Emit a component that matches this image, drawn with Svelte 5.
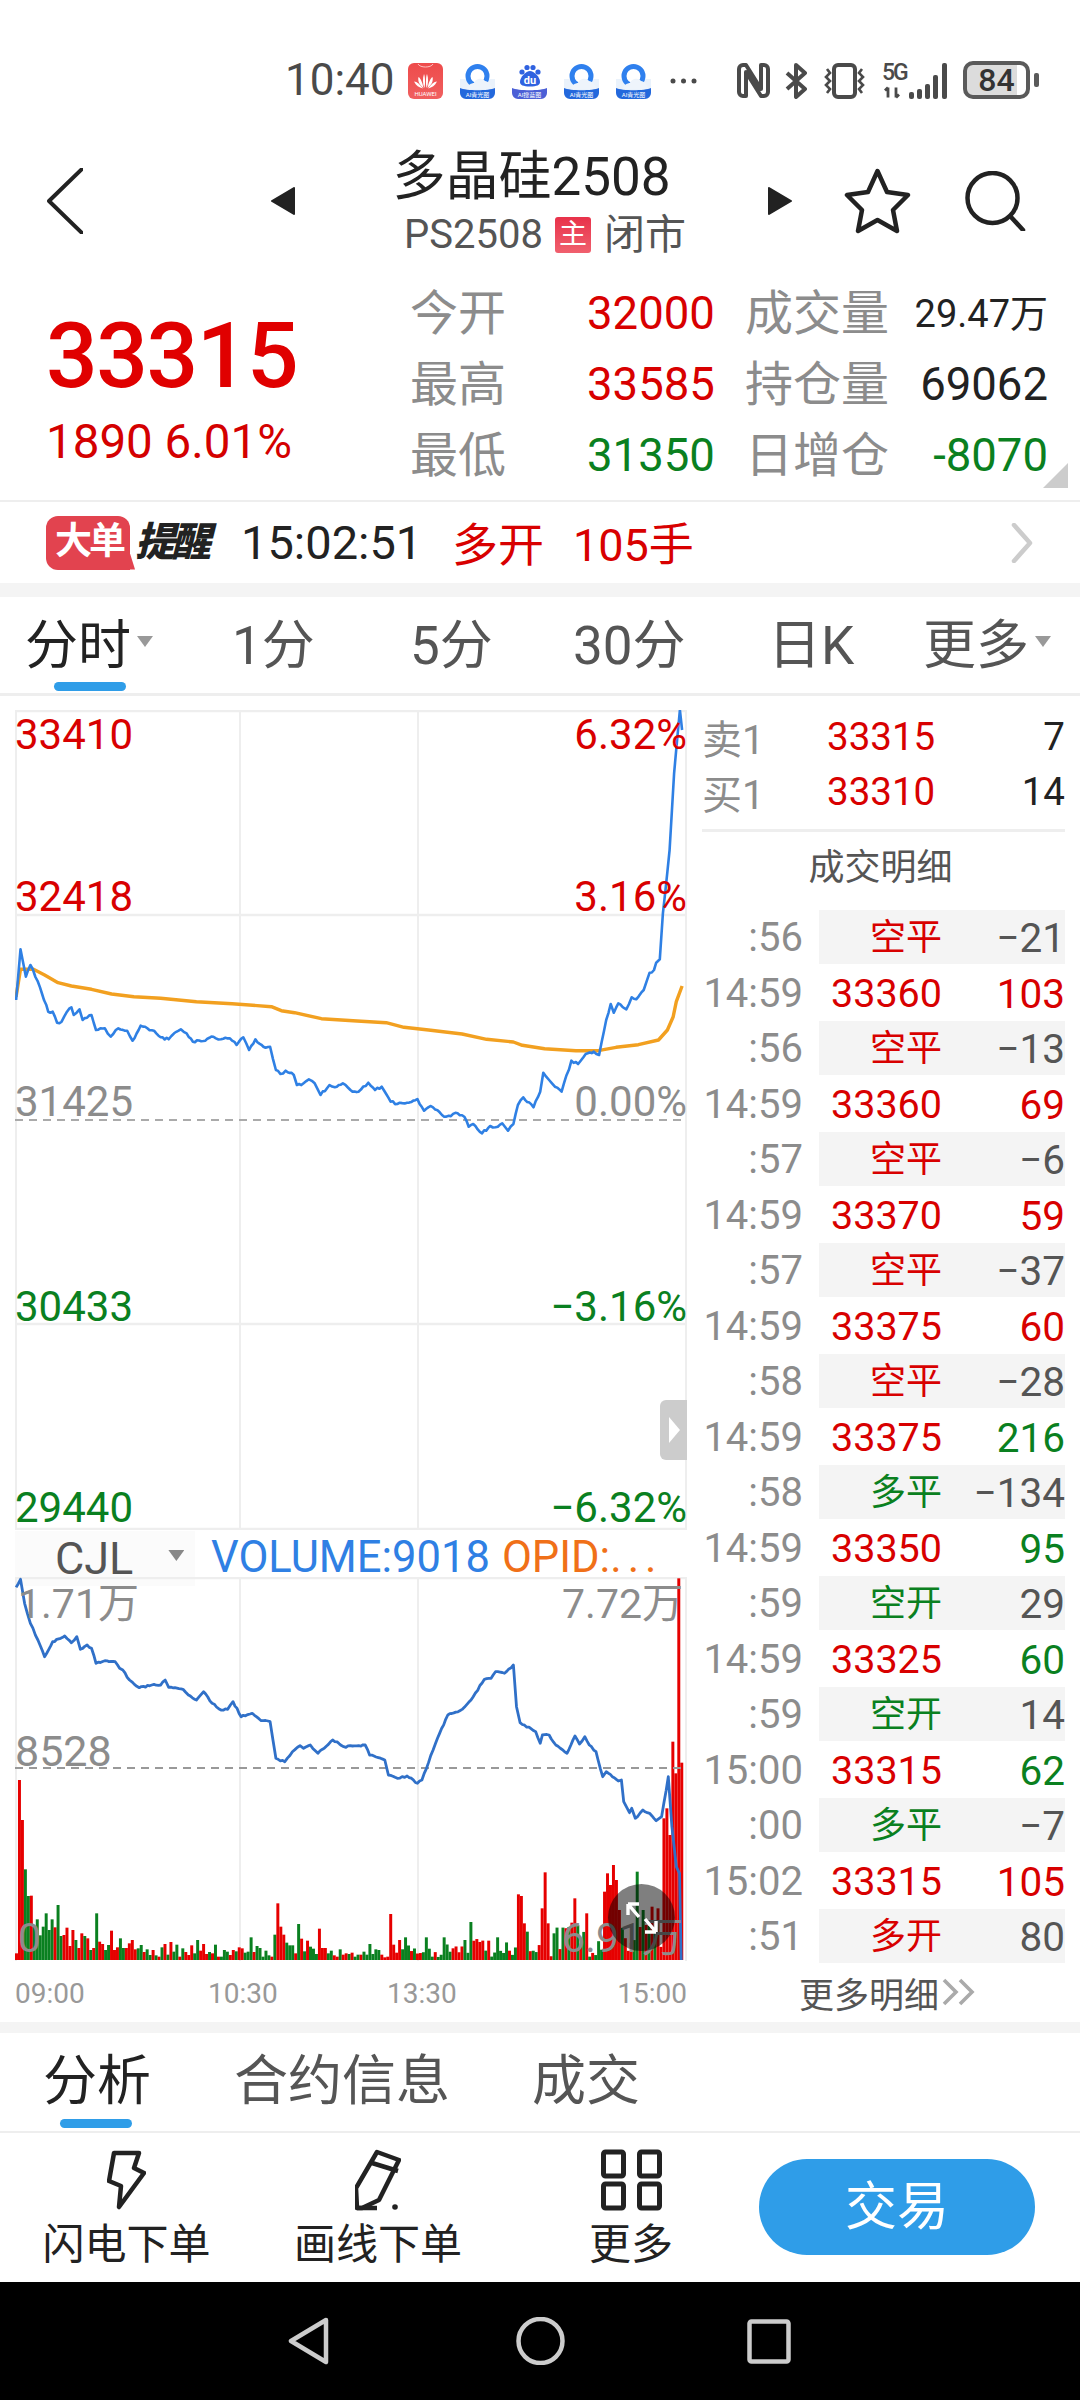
<script>
  const quoteRows = [
    { label: '今开', value: '32000', tone: 'up', label2: '成交量', value2: '29.47万', tone2: 'dark small' },
    { label: '最高', value: '33585', tone: 'up', label2: '持仓量', value2: '69062', tone2: 'dark' },
    { label: '最低', value: '31350', tone: 'down', label2: '日增仓', value2: '-8070', tone2: 'down' }
  ];

  const periods = ['分时', '1分', '5分', '30分', '日K', '更多'];

  const trades = [
    [':56', '空平', '−21', 'up', 'gray'],
    ['14:59', '33360', '103', 'up', 'up'],
    [':56', '空平', '−13', 'up', 'gray'],
    ['14:59', '33360', '69', 'up', 'up'],
    [':57', '空平', '−6', 'up', 'gray'],
    ['14:59', '33370', '59', 'up', 'up'],
    [':57', '空平', '−37', 'up', 'gray'],
    ['14:59', '33375', '60', 'up', 'up'],
    [':58', '空平', '−28', 'up', 'gray'],
    ['14:59', '33375', '216', 'up', 'down'],
    [':58', '多平', '−134', 'down', 'gray'],
    ['14:59', '33350', '95', 'up', 'down'],
    [':59', '空开', '29', 'down', 'gray'],
    ['14:59', '33325', '60', 'up', 'down'],
    [':59', '空开', '14', 'down', 'gray'],
    ['15:00', '33315', '62', 'up', 'down'],
    [':00', '多平', '−7', 'down', 'gray'],
    ['15:02', '33315', '105', 'up', 'up'],
    [':51', '多开', '80', 'up', 'gray']
  ];

  // traced from the chart, x is scaled by 2.24 and y by 3
  const priceRaw = [[36,900],[46,748],[58,830],[68,795],[85,845],[108,935],[118,935],[128,968],[138,965],[150,935],[160,922],[165,945],[178,928],[185,960],[205,945],[215,990],[235,985],[248,1010],[265,985],[285,992],[297,1022],[315,977],[330,985],[345,992],[360,1012],[378,1018],[390,1000],[405,988],[418,1000],[432,1025],[460,1022],[478,1010],[495,1018],[515,1015],[530,1035],[545,1012],[558,1050],[572,1018],[590,1040],[605,1040],[618,1110],[628,1122],[640,1112],[658,1125],[665,1155],[680,1150],[692,1138],[705,1150],[718,1185],[738,1155],[750,1162],[768,1150],[785,1170],[803,1175],[825,1148],[840,1170],[855,1160],[875,1205],[890,1212],[912,1208],[935,1197],[950,1232],[965,1218],[995,1250],[1025,1240],[1040,1250],[1050,1280],[1060,1272],[1080,1300],[1098,1278],[1110,1282],[1125,1270],[1138,1292],[1150,1272],[1160,1215],[1172,1192],[1195,1222],[1210,1175],[1217,1118],[1230,1140],[1243,1160],[1258,1175],[1280,1082],[1295,1092],[1312,1062],[1330,1055],[1342,1065],[1358,960],[1368,912],[1375,938],[1385,910],[1403,928],[1415,892],[1425,898],[1442,870],[1455,818],[1465,810],[1470,788],[1478,778],[1485,640],[1500,450],[1510,220],[1523,30],[1528,90]];

  const avgRaw = [[36,890],[46,808],[75,808],[100,825],[130,848],[160,858],[205,868],[250,882],[300,890],[360,895],[440,905],[520,911],[608,920],[630,932],[660,938],[720,956],[800,963],[865,968],[905,982],[960,990],[1035,1002],[1090,1018],[1150,1026],[1170,1036],[1220,1046],[1290,1052],[1340,1052],[1380,1042],[1430,1034],[1475,1020],[1495,990],[1508,950],[1515,905],[1528,858]];

  const openRaw = [[36,262],[46,238],[55,310],[68,370],[85,420],[100,470],[118,425],[145,408],[160,428],[172,410],[180,448],[195,435],[205,445],[215,490],[235,482],[258,485],[268,505],[275,510],[290,540],[312,563],[340,555],[360,555],[370,540],[378,562],[410,568],[422,585],[440,600],[456,575],[475,610],[495,630],[510,628],[522,605],[540,650],[565,640],[585,662],[605,665],[618,775],[638,785],[655,755],[672,737],[680,745],[695,735],[712,760],[745,720],[770,740],[818,735],[828,765],[862,780],[870,825],[890,835],[912,828],[935,850],[945,840],[980,715],[1003,645],[1030,632],[1040,622],[1060,590],[1085,538],[1100,535],[1110,515],[1130,520],[1150,495],[1157,620],[1165,668],[1200,695],[1210,730],[1215,705],[1230,705],[1245,735],[1255,745],[1270,760],[1288,708],[1298,732],[1310,710],[1320,735],[1335,755],[1350,830],[1358,815],[1385,843],[1392,840],[1397,905],[1410,938],[1415,925],[1423,955],[1440,930],[1455,940],[1470,962],[1482,950],[1497,830],[1505,980],[1515,1100],[1522,1120],[1526,1380]];

  // first 130 volume bars, heights in 1/3 px
  const earlyHeights = [20,540,420,272,192,193,100,122,74,100,140,90,122,98,165,72,75,97,42,90,60,36,80,72,65,30,36,140,55,48,30,45,88,30,38,65,36,36,50,60,32,35,45,24,32,15,30,14,10,38,48,16,54,25,46,10,35,24,15,44,20,60,28,48,18,24,20,46,10,10,30,25,15,30,26,38,35,22,25,68,24,42,36,10,28,14,10,76,170,100,76,52,44,44,20,108,64,26,58,40,34,18,94,36,36,20,28,14,10,32,16,20,18,22,10,16,16,25,16,48,18,32,30,16,8,10,138,46,22,60];
  const earlyTones = 'rrrggrggggggg' + 'rgg' + 'rrrrgrrgrgrgrrggrrrggrrrrggrggrgrgrgrggrgrrrggrrr' + 'grgrgggrrgrrgggrgggggrgrrrgggrgrgrgggrrrggrrgrrgrggrgggggg';

  const tallBars = [[903,1312,'g'],[950,1312,'g'],[990,1312,'g'],[1035,1320,'g'],[1050,1266,'g'],[1090,1322,'r'],[1157,1183,'r'],[1164,1188,'r'],[1170,1270,'r'],[1177,1295,'g'],[1210,1225,'r'],[1217,1117,'r'],[1224,1270,'r'],[1237,1300,'g'],[1275,1268,'r'],[1283,1195,'r'],[1310,1240,'r'],[1349,1175,'r'],[1356,1120,'r'],[1363,1155,'r'],[1370,1095,'r'],[1377,1140,'r'],[1385,1230,'r'],[1423,1115,'g'],[1440,1230,'g'],[1460,1220,'r'],[1472,1225,'r'],[1482,955,'r'],[1488,925,'r'],[1495,1005,'r'],[1502,725,'r'],[1508,820,'r'],[1515,235,'r'],[1522,788,'r'],[1529,775,'g']];

  const RED = '#e60000';
  const GREEN = '#0a8020';

  let seed = 17;
  const next = () => {
    seed = (seed * 1103515245 + 12345) % 2147483648;
    return seed / 2147483648;
  };

  const mapX = (x) => x / 2.24;

  // adds small ticks between the traced points so the line looks like raw ticks
  function toPoints(raw, top, jitter) {
    const pts = [];
    raw.forEach(([x, y], i) => {
      const px = mapX(x);
      const py = top + y / 3;
      if (jitter && i > 0) {
        const prevX = mapX(raw[i - 1][0]);
        const prevY = top + raw[i - 1][1] / 3;
        const steps = Math.floor((px - prevX) / 2);
        for (let s = 1; s < steps; s++) {
          const t = s / steps;
          const ny = prevY + (py - prevY) * t + (next() - 0.5) * jitter;
          pts.push(`${(prevX + (px - prevX) * t).toFixed(1)},${ny.toFixed(1)}`);
        }
      }
      pts.push(`${px.toFixed(1)},${py.toFixed(1)}`);
    });
    return pts.join(' ');
  }

  const pricePoints = toPoints(priceRaw, 700, 2.4);
  const avgPoints = toPoints(avgRaw, 700, 0);
  const openPoints = toPoints(openRaw, 1500, 1.6);

  function buildBars() {
    const list = [];
    for (let i = 0; i < 225; i++) {
      if (i < earlyHeights.length) {
        list.push({
          x: 15 + i * 2.97,
          h: earlyHeights[i] / 3,
          fill: earlyTones[i] === 'g' ? GREEN : RED
        });
        continue;
      }
      const zoneMax = i > 172 ? 34 : i > 150 ? 20 : 13;
      list.push({
        x: 15 + i * 2.97,
        h: 3 + next() * zoneMax,
        fill: next() > 0.5 ? RED : GREEN
      });
    }
    for (const [zx, top, tone] of tallBars) {
      const i = Math.round((mapX(zx) - 15) / 2.97);
      if (list[i]) {
        list[i].h = (1380 - top) / 3;
        list[i].fill = tone === 'r' ? RED : GREEN;
      }
    }
    return list;
  }

  const bars = buildBars();
</script>

{#snippet cloudApp(kind)}
  <svg class="app-icon" viewBox="0 0 35 36">
    <rect width="35" height="36" rx="6" fill="#fff" />
    {#if kind === 'du'}
      <circle cx="10" cy="9" r="2.6" fill="#2f62e0" />
      <circle cx="15" cy="4.5" r="2.6" fill="#2f62e0" />
      <circle cx="21" cy="4.5" r="2.6" fill="#2f62e0" />
      <circle cx="26" cy="9" r="2.6" fill="#2f62e0" />
      <path d="M18 8c-4 0-10 6-10 11 0 3 3 4.5 10 4.5s10-1.5 10-4.5c0-5-6-11-10-11z" fill="#2f62e0" />
      <text x="18" y="21" class="du-text">du</text>
    {:else}
      <path d="M0 16h35v12H0z" fill="#eaf2fb" />
      <circle cx="17.5" cy="13" r="9.5" fill="#fff" stroke="#2f80ee" stroke-width="5" />
      <path d="M7 26c0-4 5-6 7-6 1-4 8-6 11-2 3 0 7 4 7 8z" fill="#eef4fb" />
    {/if}
    <path d="M0 25c6 3 29 3 35 0v5a6 6 0 0 1-6 6H6a6 6 0 0 1-6-6z" fill={kind === 'du' ? '#4b5fd6' : '#2368dc'} />
    <text x="17.5" y="33.5" class="mini-text">{kind === 'du' ? 'AI搜蓝图' : 'AI青光图'}</text>
  </svg>
{/snippet}

<div class="phone">
  <div class="status">
    <span class="clock">10:40</span>
    <svg class="app-icon" viewBox="0 0 35 36">
      <defs>
        <linearGradient id="hw" x1="0" y1="0" x2="0" y2="1">
          <stop offset="0" stop-color="#ee4b4b" /><stop offset="1" stop-color="#f06060" />
        </linearGradient>
      </defs>
      <rect width="35" height="36" rx="6" fill="url(#hw)" />
      <path d="M10 1c2 4 13 4 15 0" fill="none" stroke="#ffc0c0" stroke-width="1" />
      <g fill="#fff">
        <path d="M16.5 25c-2-4-2-10-.5-14 1 2 1.5 9 .5 14z" />
        <path d="M18.5 25c2-4 2-10 .5-14-1 2-1.5 9-.5 14z" />
        <path d="M15.5 25c-4-3-6-7-5-11 2 1 4 6 5 11z" />
        <path d="M19.5 25c4-3 6-7 5-11-2 1-4 6-5 11z" />
        <path d="M15 25.5c-4-1-7-3-9-7 3 0 6 3 9 7z" />
        <path d="M20 25.5c4-1 7-3 9-7-3 0-6 3-9 7z" />
      </g>
      <text x="17.5" y="32.5" class="mini-text">HUAWEI</text>
    </svg>
    {#each ['ai', 'du', 'ai', 'ai'] as kind}
      {@render cloudApp(kind)}
    {/each}
    <svg class="dots" viewBox="0 0 27 6">
      <circle cx="3" cy="3" r="2.5" /><circle cx="13.5" cy="3" r="2.5" /><circle cx="24" cy="3" r="2.5" />
    </svg>
    <svg class="nfc" viewBox="0 0 33 35">
      <path d="M9 2H6a4 4 0 0 0-4 4v23a4 4 0 0 0 4 4h3V9l15 24h3a4 4 0 0 0 4-4V6a4 4 0 0 0-4-4h-3v24L9 2z" fill="none" stroke="#4a4a4a" stroke-width="4" stroke-linejoin="round" />
    </svg>
    <svg class="bt" viewBox="0 0 22 36">
      <path d="M2 10l18 16-9 8V2l9 8L2 26" fill="none" stroke="#4a4a4a" stroke-width="4" stroke-linejoin="round" />
    </svg>
    <svg class="vibrate" viewBox="0 0 45 36">
      <rect x="12" y="2" width="21" height="32" rx="4" fill="none" stroke="#4a4a4a" stroke-width="4" />
      <path d="M5 6l3 4-4 4 4 4-4 4 4 4-3 4M40 6l-3 4 4 4-4 4 4 4-4 4 3 4" fill="none" stroke="#4a4a4a" stroke-width="2.6" />
    </svg>
    <div class="signal">
      <div class="net">
        <span>5G</span>
        <svg viewBox="0 0 20 12"><path d="M6 1v10M3 4l3-3M14 1v10M14 11l3-3" fill="none" stroke="#4a4a4a" stroke-width="2.8" /></svg>
      </div>
      <svg class="bars" viewBox="0 0 38 36">
        <rect x="0" y="29" width="5" height="7" rx="2" />
        <rect x="8" y="26" width="5" height="10" rx="2" />
        <rect x="16" y="21" width="5" height="15" rx="2" />
        <rect x="24" y="12" width="5" height="24" rx="2" />
        <rect x="33" y="0" width="5" height="36" rx="2" />
      </svg>
    </div>
    <div class="battery"><span class="level">84</span></div>
    <span class="battery-tip"></span>
  </div>

  <div class="header">
    <svg class="back" viewBox="0 0 36 66">
      <path d="M35 1L2 33l33 32" fill="none" stroke="#222" stroke-width="4" stroke-linecap="round" stroke-linejoin="round" />
    </svg>
    <svg class="arrow prev" viewBox="0 0 25 28"><path d="M24 1v26L2 14z" stroke="#222" stroke-width="2" stroke-linejoin="round" fill="#222" /></svg>
    <div class="title-block">
      <div class="title">多晶硅2508</div>
      <div class="subtitle">
        <span>PS2508</span>
        <span class="main-tag">主</span>
        <span class="closed">闭市</span>
      </div>
    </div>
    <svg class="arrow" viewBox="0 0 25 28"><path d="M1 1v26l22-13z" stroke="#222" stroke-width="2" stroke-linejoin="round" fill="#222" /></svg>
    <svg class="star" viewBox="0 0 67 66">
      <path d="M33.5 3L43 24l21 3-15 15 4 21-19.5-11L14 63l4-21L3 27l21-3z" fill="none" stroke="#222" stroke-width="4.5" stroke-linejoin="round" />
    </svg>
    <svg class="search" viewBox="0 0 61 60">
      <circle cx="27.5" cy="27" r="25" fill="none" stroke="#222" stroke-width="4.5" />
      <path d="M46 46l12 13" stroke="#222" stroke-width="4.5" stroke-linecap="round" />
    </svg>
  </div>

  <div class="quote">
    <div class="last">
      <div class="last-price">33315</div>
      <div class="last-change">1890 6.01%</div>
    </div>
    <div class="quote-grid">
      {#each quoteRows as row}
        <span class="q-label">{row.label}</span>
        <span class="q-value {row.tone}">{row.value}</span>
        <span class="q-label second">{row.label2}</span>
        <span class="q-value {row.tone2}">{row.value2}</span>
      {/each}
    </div>
    <span class="corner"></span>
  </div>

  <div class="alert">
    <div class="big-order">大单</div>
    <div class="remind">提醒</div>
    <span class="alert-time">15:02:51</span>
    <span class="alert-side">多开</span>
    <span class="alert-size">105手</span>
    <svg class="alert-go" viewBox="0 0 22 40">
      <path d="M3 2l16 18L3 38" fill="none" stroke="#ccc" stroke-width="4.5" stroke-linecap="round" stroke-linejoin="round" />
    </svg>
  </div>

  <div class="band"></div>

  <div class="periods">
    {#each periods as p, i}
      <div class="period" class:active={i === 0}>
        <span>{p}</span>
        {#if i === 0 || i === 5}<i class="caret"></i>{/if}
      </div>
    {/each}
  </div>

  <div class="main">
    <div class="charts">
      <div class="price-chart">
        <svg viewBox="0 0 672 820" class="chart-svg">
          <g transform="translate(-15 -710)">
            <path d="M16 710V1530M240 710V1530M418 710V1530M686 710V1530" stroke="#eee" stroke-width="2" fill="none" />
            <path d="M15 711H687M15 915H687M15 1324H687M15 1529H687" stroke="#eee" stroke-width="2.5" fill="none" />
            <path d="M15 1120H687" stroke="#aaa" stroke-width="2" stroke-dasharray="8 6" fill="none" />
            <polyline points={avgPoints} fill="none" stroke="#f2a020" stroke-width="3.4" stroke-linejoin="round" />
            <polyline points={pricePoints} fill="none" stroke="#2f80e4" stroke-width="2.6" stroke-linejoin="round" />
          </g>
        </svg>
        <span class="axis l up r1">33410</span>
        <span class="axis r up r1">6.32%</span>
        <span class="axis l up r2">32418</span>
        <span class="axis r up r2">3.16%</span>
        <span class="axis l flat r3">31425</span>
        <span class="axis r flat r3">0.00%</span>
        <span class="axis l down r4">30433</span>
        <span class="axis r down r4">−3.16%</span>
        <span class="axis l down r5">29440</span>
        <span class="axis r down r5">−6.32%</span>
        <div class="handle"><i></i></div>
      </div>

      <div class="indicator">
        <div class="picker"><span>CJL</span><i></i></div>
        <span class="vol-text">VOLUME:9018</span>
        <span class="opid-text">OPID:<span class="more-dots">...</span></span>
      </div>

      <div class="volume-chart">
        <svg viewBox="0 0 672 384" class="chart-svg">
          <g transform="translate(-15 -1577)">
            <path d="M16 1577V1961M240 1577V1961M418 1577V1961M686 1577V1961" stroke="#eee" stroke-width="2" fill="none" />
            <path d="M15 1578H687" stroke="#eee" stroke-width="2.5" fill="none" />
            {#each bars as b}
              <rect x={b.x} y={1960 - b.h} width="2.97" height={b.h} fill={b.fill} />
            {/each}
            <path d="M15 1768H687" stroke="#999" stroke-width="2" stroke-dasharray="8 6" fill="none" />
            <polyline points={openPoints} fill="none" stroke="#3070c8" stroke-width="2.8" stroke-linejoin="round" />
          </g>
        </svg>
        <span class="vol-axis l v1">1.71万</span>
        <span class="vol-axis r v1">7.72万</span>
        <span class="vol-axis l v2">8528</span>
        <span class="vol-axis l v3">0</span>
        <span class="vol-axis r v3">6.91万</span>
        <div class="expand">
          <svg viewBox="0 0 34 36">
            <path d="M3 4l11 13M3 4h11M3 4v11M31 32L20 19M31 32H20M31 32V21" fill="none" stroke="#fff" stroke-width="3.4" />
          </svg>
        </div>
      </div>

      <div class="times">
        <span>09:00</span>
        <span class="t2">10:30</span>
        <span class="t3">13:30</span>
        <span class="t4">15:00</span>
      </div>
    </div>

    <div class="side">
      <div class="book"><span class="b-name">卖1</span><span class="b-price">33315</span><span class="b-vol">7</span></div>
      <div class="book"><span class="b-name">买1</span><span class="b-price">33310</span><span class="b-vol">14</span></div>
      <div class="side-rule"></div>
      <div class="side-title">成交明细</div>
      {#each trades as t, i}
        <div class="trade" class:shade={i % 2 === 0}>
          <span class="t-time">{t[0]}</span>
          <div class="t-cells">
            <span class="t-mid {t[3]}">{t[1]}</span>
            <span class="t-val {t[4]}">{t[2]}</span>
          </div>
        </div>
      {/each}
      <div class="more-detail">
        <span>更多明细</span>
        <svg viewBox="0 0 36 28">
          <path d="M3 2l12 12L3 26M19 2l12 12-12 12" fill="none" stroke="#aaa" stroke-width="3.6" />
        </svg>
      </div>
    </div>
  </div>

  <div class="band narrow"></div>

  <div class="sub-tabs">
    <span class="sub-tab active">分析</span>
    <span class="sub-tab">合约信息</span>
    <span class="sub-tab">成交</span>
  </div>

  <div class="toolbar">
    <div class="tool">
      <svg viewBox="0 0 39 58" class="tool-icon bolt">
        <path d="M7 2h25l-5 15 10 5-25 34 2-21-12-5z" fill="none" stroke="#222" stroke-width="4.5" stroke-linejoin="round" />
      </svg>
      <span>闪电下单</span>
    </div>
    <div class="tool">
      <svg viewBox="0 0 46 60" class="tool-icon pencil">
        <path d="M22 2l22 8-20 40-17 8H2L1 38z" fill="none" stroke="#222" stroke-width="4.5" stroke-linejoin="round" />
        <path d="M17 13l26 8M2 58h20" stroke="#222" stroke-width="4.5" fill="none" />
        <circle cx="40" cy="57" r="2.8" fill="#222" />
      </svg>
      <span>画线下单</span>
    </div>
    <div class="tool">
      <svg viewBox="0 0 61 61" class="tool-icon grid">
        <rect x="2.5" y="2.5" width="20" height="24" rx="2" /><rect x="38.5" y="2.5" width="20" height="24" rx="2" />
        <rect x="2.5" y="34.5" width="20" height="24" rx="2" /><rect x="38.5" y="34.5" width="20" height="24" rx="2" />
      </svg>
      <span>更多</span>
    </div>
    <div class="trade-btn">交易</div>
  </div>

  <div class="navbar">
    <svg class="nav-back" viewBox="0 0 41 48"><path d="M38 3L3 24l35 21z" fill="none" stroke="#ccc" stroke-width="4.5" stroke-linejoin="round" /></svg>
    <svg class="nav-home" viewBox="0 0 49 48"><circle cx="24.5" cy="24" r="22" fill="none" stroke="#ccc" stroke-width="4.5" /></svg>
    <svg class="nav-recent" viewBox="0 0 44 45"><rect x="2.5" y="2.5" width="39" height="40" rx="2" fill="none" stroke="#ccc" stroke-width="4.5" /></svg>
  </div>
</div>

<style>
  :global(body) {
    margin: 0;
    background: #fff;
  }

  .phone {
    width: 1080px;
    height: 2400px;
    display: flex;
    flex-direction: column;
    overflow: hidden;
    font-family: Roboto, "Noto Sans CJK SC", sans-serif;
    color: #222;
    background: #fff;
  }

  /* status bar */
  .status {
    height: 120px;
    box-sizing: border-box;
    padding: 60px 0 0 285px;
    display: flex;
    align-items: flex-start;
    gap: 17px;
  }

  .status > * {
    flex: none;
  }

  .clock {
    font-size: 44px;
    line-height: 40px;
    width: 111px;
    margin-right: -5px;
    color: #4a4a4a;
  }

  .app-icon {
    width: 35px;
    height: 36px;
    margin-top: 3px;
  }

  .mini-text {
    font-size: 6px;
    fill: #fff;
    text-anchor: middle;
  }

  .du-text {
    font-size: 11px;
    font-weight: 700;
    fill: #fff;
    text-anchor: middle;
  }

  .dots {
    width: 27px;
    height: 6px;
    margin: 18px 0 0 2px;
    fill: #4a4a4a;
  }

  .nfc {
    width: 33px;
    height: 35px;
    margin: 3px 0 0 23px;
  }

  .bt {
    width: 22px;
    height: 36px;
    margin: 3px 0 0 -2px;
  }

  .vibrate {
    width: 45px;
    height: 36px;
    margin: 3px 0 0 -2px;
  }

  .signal {
    display: flex;
    align-items: flex-end;
    margin: 3px 0 0 -2px;
    height: 36px;
    gap: 5px;
  }

  .net {
    width: 22px;
    display: flex;
    flex-direction: column;
    font-size: 23px;
    line-height: 20px;
    font-weight: 500;
    letter-spacing: -2px;
    color: #4a4a4a;
  }

  .net svg {
    width: 20px;
    height: 13px;
    margin-top: 3px;
  }

  .bars {
    width: 38px;
    height: 36px;
    fill: #4a4a4a;
  }

  .battery {
    width: 67px;
    height: 38px;
    box-sizing: border-box;
    margin: 1px 0 0 -1px;
    border: 4px solid #5a5a5a;
    border-radius: 10px;
    background: linear-gradient(90deg, #dcdcdc 84%, #fff 84%);
    display: flex;
    align-items: center;
    justify-content: center;
  }

  .level {
    font-size: 32px;
    line-height: 30px;
    font-weight: 500;
    color: #333;
  }

  .battery-tip {
    width: 5px;
    height: 14px;
    margin: 13px 0 0 -13px;
    background: #5a5a5a;
    border-radius: 2px;
  }

  /* header */
  .header {
    height: 158px;
    box-sizing: border-box;
    padding: 4px 0 0 47px;
    display: flex;
    align-items: center;
  }

  .header > svg {
    flex: none;
  }

  .back {
    width: 36px;
    height: 66px;
  }

  .arrow {
    width: 25px;
    height: 28px;
  }

  .arrow.prev {
    margin-left: 187px;
  }

  .title-block {
    width: 473px;
    display: flex;
    flex-direction: column;
    align-items: center;
  }

  .title {
    font-size: 53px;
    line-height: 60px;
    height: 60px;
    white-space: nowrap;
    color: #222;
  }

  .subtitle {
    display: flex;
    align-items: center;
    margin-top: 8px;
    padding-left: 27px;
    font-size: 40px;
    line-height: 40px;
    color: #555;
    white-space: nowrap;
  }

  .main-tag {
    width: 36px;
    height: 36px;
    margin-left: 12px;
    border-radius: 3px;
    background: linear-gradient(#e8324a, #f0606e);
    color: #fff;
    font-size: 28px;
    line-height: 36px;
    text-align: center;
  }

  .closed {
    margin-left: 13px;
    font-size: 41px;
  }

  .star {
    width: 67px;
    height: 66px;
    margin-left: 51px;
  }

  .search {
    width: 61px;
    height: 60px;
    margin-left: 54px;
  }

  /* quote */
  .quote {
    position: relative;
    height: 222px;
    display: flex;
  }

  .last {
    width: 410px;
    flex: none;
    box-sizing: border-box;
    padding: 32px 0 0 46px;
  }

  .last-price {
    font-size: 91px;
    line-height: 92px;
    font-weight: 500;
    letter-spacing: -1.5px;
    color: #e00000;
  }

  .last-change {
    margin-top: 17px;
    font-size: 47.5px;
    line-height: 46px;
    color: #d40000;
    white-space: nowrap;
  }

  .quote-grid {
    display: grid;
    grid-template-columns: 177px 124px 176px 161px;
    grid-auto-rows: 71px;
    align-items: center;
  }

  .q-label {
    font-size: 48px;
    line-height: 50px;
    color: #8c8c8c;
    white-space: nowrap;
  }

  .q-label.second {
    padding-left: 34px;
  }

  .q-value {
    font-size: 45.5px;
    line-height: 50px;
    text-align: right;
    white-space: nowrap;
  }

  .q-value.small {
    font-size: 38px;
  }

  .corner {
    position: absolute;
    right: 12px;
    bottom: 12px;
    width: 25px;
    height: 25px;
    background: #ccc;
    clip-path: polygon(100% 0, 100% 100%, 0 100%);
  }

  .up {
    color: #d80000;
  }

  .down {
    color: #0a8020;
  }

  .dark {
    color: #222;
  }

  .gray {
    color: #555;
  }

  .flat {
    color: #8c8c8c;
  }

  /* big order alert */
  .alert {
    height: 83px;
    box-sizing: border-box;
    border-top: 2px solid #eee;
    padding-left: 46px;
    display: flex;
    align-items: center;
    white-space: nowrap;
  }

  .big-order {
    position: relative;
    width: 84px;
    height: 54px;
    background: #e2434f;
    border-radius: 12px 12px 0 12px;
    color: #fff;
    font-size: 37px;
    line-height: 52px;
    font-weight: 700;
    letter-spacing: -3px;
    padding-left: 9px;
    box-sizing: border-box;
  }

  .big-order::after {
    content: "";
    position: absolute;
    left: 84px;
    bottom: 0;
    width: 5px;
    height: 16px;
    background: #e2434f;
    clip-path: polygon(0 0, 100% 100%, 0 100%);
  }

  .remind {
    margin-left: 5px;
    width: 76px;
    font-size: 40px;
    font-weight: 900;
    font-style: italic;
    letter-spacing: -4px;
    line-height: 54px;
    color: #222;
  }

  .alert-time {
    margin-left: 30px;
    width: 180px;
    font-size: 47px;
    color: #222;
  }

  .alert-side {
    margin: -3px 0 0 31px;
    width: 92px;
    font-size: 46px;
    color: #d80000;
  }

  .alert-size {
    margin: -2px 0 0 29px;
    font-size: 45px;
    color: #d80000;
  }

  .alert-go {
    width: 22px;
    height: 40px;
    margin-left: auto;
    margin-right: 47px;
  }

  .band {
    height: 14px;
    flex: none;
    background: #f4f4f4;
  }

  .band.narrow {
    height: 11px;
  }

  /* period tabs */
  .periods {
    height: 99px;
    box-sizing: border-box;
    border-bottom: 3px solid #eee;
    padding-left: 25px;
    display: grid;
    grid-template-columns: 207px 178px 163px 195px 155px auto;
    align-items: center;
  }

  .period {
    position: relative;
    display: flex;
    align-items: center;
    font-size: 53px;
    line-height: 96px;
    color: #555;
    white-space: nowrap;
  }

  .period span {
    margin-top: 1px;
  }

  .period.active {
    color: #222;
  }

  .period.active::after {
    content: "";
    position: absolute;
    left: 29px;
    top: 85px;
    width: 72px;
    height: 9px;
    border-radius: 5px;
    background: #2f9de8;
  }

  .caret {
    width: 16px;
    height: 11px;
    margin: -8px 0 0 6px;
    background: #999;
    clip-path: polygon(0 0, 100% 0, 50% 100%);
  }

  /* charts */
  .main {
    height: 1326px;
    display: flex;
    padding-top: 14px;
    box-sizing: border-box;
  }

  .charts {
    width: 702px;
    flex: none;
    padding-left: 15px;
    box-sizing: border-box;
  }

  .price-chart {
    position: relative;
    width: 672px;
    height: 820px;
  }

  .chart-svg {
    display: block;
    width: 100%;
    height: 100%;
  }

  .axis {
    position: absolute;
    font-size: 42px;
    line-height: 42px;
    white-space: nowrap;
  }

  .axis.l {
    left: 0;
  }

  .axis.r {
    right: 0;
  }

  .r1 { top: 4px; }
  .r2 { top: 166px; }
  .r3 { top: 371px; }
  .r4 { top: 576px; }
  .r5 { top: 777px; }

  .handle {
    position: absolute;
    right: 0;
    top: 690px;
    width: 27px;
    height: 60px;
    border-radius: 6px 0 0 6px;
    background: #ccc;
    display: flex;
    align-items: center;
    padding-left: 9px;
    box-sizing: border-box;
  }

  .handle i {
    width: 11px;
    height: 26px;
    background: #fff;
    clip-path: polygon(0 0, 100% 50%, 0 100%);
  }

  .indicator {
    height: 47px;
    display: flex;
    align-items: center;
    white-space: nowrap;
  }

  .picker {
    position: relative;
    width: 180px;
    height: 55px;
    margin-top: 10px;
    flex: none;
    background: #fbfbfb;
    display: flex;
    align-items: center;
    font-size: 45px;
    color: #555;
    padding-left: 40px;
    box-sizing: border-box;
  }

  .picker i {
    width: 16px;
    height: 11px;
    margin: -6px 0 0 35px;
    background: #888;
    clip-path: polygon(0 0, 100% 0, 50% 100%);
  }

  .vol-text {
    margin: 8px 0 0 16px;
    font-size: 43.5px;
    color: #2f80e4;
  }

  .opid-text {
    margin: 8px 0 0 12px;
    font-size: 43.5px;
    color: #f07018;
  }

  .more-dots {
    letter-spacing: 6px;
  }

  .volume-chart {
    position: relative;
    width: 672px;
    height: 384px;
  }

  .vol-axis {
    position: absolute;
    font-size: 41px;
    line-height: 40px;
    color: #8c8c8c;
    white-space: nowrap;
  }

  .vol-axis.l {
    left: 3px;
  }

  .vol-axis.r {
    right: 4px;
  }

  .v1 { top: 7px; }
  .vol-axis.v2 { top: 154px; left: 0; font-size: 43px; }
  .v3 { top: 341px; }

  .expand {
    position: absolute;
    left: 593px;
    top: 307px;
    width: 67px;
    height: 67px;
    border-radius: 50%;
    background: rgba(0, 0, 0, 0.5);
    display: flex;
    align-items: center;
    justify-content: center;
  }

  .expand svg {
    width: 34px;
    height: 36px;
  }

  .times {
    position: relative;
    height: 61px;
    width: 672px;
    font-size: 28px;
    line-height: 61px;
    color: #999;
  }

  .times span {
    position: absolute;
    top: 2px;
  }

  .times .t2 { left: 193px; }
  .times .t3 { left: 372px; }
  .times .t4 { right: 0; }

  /* right panel */
  .side {
    width: 363px;
    flex: none;
  }

  .book {
    height: 55px;
    margin-top: -1px;
    margin-bottom: 1px;
    display: flex;
    align-items: center;
    font-size: 38.5px;
    white-space: nowrap;
  }

  .b-name {
    width: 125px;
    color: #8c8c8c;
    font-size: 40px;
    box-sizing: border-box;
  }

  .b-price {
    width: 108px;
    color: #d80000;
  }

  .b-vol {
    width: 130px;
    text-align: right;
    color: #222;
  }

  .side-rule {
    height: 3px;
    margin-top: 10px;
    background: #eee;
  }

  .side-title {
    height: 70px;
    margin-bottom: 8px;
    margin-top: -3px;
    padding-bottom: 3px;
    display: flex;
    align-items: center;
    justify-content: center;
    font-size: 36px;
    color: #555;
    padding-right: 6px;
  }

  .trade {
    height: 57px;
    display: flex;
    align-items: center;
    font-size: 40.5px;
    line-height: 50px;
    white-space: nowrap;
  }

  .trade.shade {
    height: 54px;
  }

  .t-time {
    width: 101px;
    flex: none;
    text-align: right;
    font-size: 40px;
    color: #8c8c8c;
  }

  .t-cells {
    margin-left: 16px;
    width: 246px;
    height: 100%;
    display: grid;
    grid-template-columns: 123px 123px;
    align-items: center;
  }

  .trade span {
    margin-top: 2px;
  }

  .trade:not(.shade) span {
    margin-top: 3px;
  }

  .shade .t-cells {
    background: #f4f4f4;
  }

  .t-mid {
    text-align: right;
    font-size: 39.5px;
  }

  .shade .t-mid {
    font-size: 36px;
  }

  .t-val {
    text-align: right;
  }

  .more-detail {
    height: 58px;
    display: flex;
    align-items: center;
    padding-left: 97px;
    font-size: 35px;
    color: #555;
    white-space: nowrap;
  }

  .more-detail svg {
    width: 36px;
    height: 28px;
    margin-left: 2px;
  }

  /* bottom tabs */
  .sub-tabs {
    height: 100px;
    box-sizing: border-box;
    border-bottom: 2px solid #eee;
    padding-left: 43px;
    display: grid;
    grid-template-columns: 191px 298px auto;
    align-items: center;
  }

  .sub-tab {
    position: relative;
    font-size: 54px;
    line-height: 98px;
    color: #555;
  }

  .sub-tab.active {
    color: #222;
  }

  .sub-tab.active::after {
    content: "";
    position: absolute;
    left: 17px;
    top: 86px;
    width: 72px;
    height: 9px;
    border-radius: 5px;
    background: #2f9de8;
  }

  .toolbar {
    height: 149px;
    display: grid;
    grid-template-columns: 253px 250px 256px 276px;
  }

  .tool {
    display: flex;
    flex-direction: column;
    align-items: center;
    padding-top: 16px;
    font-size: 42px;
    line-height: 41px;
    color: #222;
    white-space: nowrap;
  }

  .tool-icon {
    height: 62px;
    margin-bottom: 13px;
  }

  .bolt { width: 39px; }
  .pencil { width: 46px; }
  .grid { width: 61px; fill: none; stroke: #222; stroke-width: 5; }

  .trade-btn {
    height: 96px;
    margin-top: 26px;
    border-radius: 48px;
    background: #2f9de8;
    color: #fff;
    font-size: 52px;
    line-height: 98px;
    text-align: center;
  }

  .navbar {
    height: 118px;
    background: #000;
    display: flex;
    align-items: center;
    padding-left: 288px;
  }

  .nav-back { width: 41px; height: 48px; }
  .nav-home { width: 49px; height: 48px; margin-left: 187px; }
  .nav-recent { width: 44px; height: 45px; margin-left: 182px; }
</style>
